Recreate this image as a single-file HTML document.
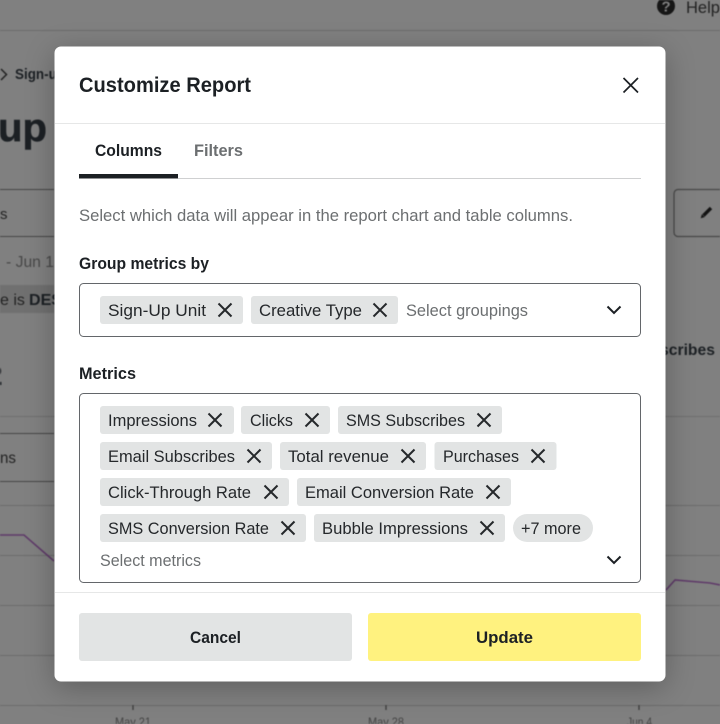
<!DOCTYPE html>
<html lang="en">
<head>
<meta charset="utf-8">
<title>Customize Report</title>
<style>
html,body{margin:0;padding:0;width:720px;height:724px;overflow:hidden;background:#808080}
svg{position:absolute;left:0;top:0;display:block}
.shadow{position:absolute;left:55px;top:47px;width:610px;height:634px;border-radius:6px;box-shadow:0 6px 30px rgba(0,0,0,.28)}
text{font-family:"Liberation Sans",sans-serif;font-size:16.5px;fill:#25282b}
.b{font-weight:700;fill:#1c2024}
.g{fill:#6c6f71}
.bg{fill:#222}
</style>
</head>
<body>
<svg width="720" height="724" viewBox="0 0 720 724" style="z-index:0;filter:blur(.6px)">
  <g fill="none">
    <path d="M0 30.500H720M0 505.500H720M0 555.500H720M0 605.500H720M0 655.500H720M0 705.500H720" stroke="#6c6c6c"/>
    <path d="M0 416.500H720" stroke="#6f6f6f"/>
    <path d="M0 189.500H54M0 236.500H54M0 433.500H54M0 481.500H54" stroke="#474747"/>
    <path d="M133 705V710M386 705V710M639 705V710" stroke="#3c3c3c" stroke-width="1.300"/>
    <path d="M0 535H24L54 561M666 590L675 580L710 583L720 585" stroke="#5f3a69" stroke-width="1.600"/>
    <path d="M1 69L6.500 74.500L1 80" stroke="#222" stroke-width="1.500"/>
    <rect x="674" y="189.500" width="60" height="47" rx="4" stroke="#474747" stroke-width="1.200"/>
    <path d="M703.500 215.500L711 208" stroke="#141414" stroke-width="3.400"/>
  </g>
  <path d="M700.700 218.200L701.800 214.200L704.700 217.100Z" fill="#141414"/>
  <rect x="0" y="285" width="54" height="28" fill="#707070"/>
  <circle cx="666" cy="6" r="9" fill="#161616"/>
  <text x="661.500" y="11.500" style="font-size:15px;font-weight:700;fill:#808080">?</text>
  <text x="686" y="13" class="bg" style="font-size:17px" textLength="34" lengthAdjust="spacingAndGlyphs">Help</text>
  <text x="15" y="79" class="b" style="font-size:15px" textLength="50" lengthAdjust="spacingAndGlyphs">Sign-up</text>
  <text x="-2" y="141" class="b" style="font-size:40px;stroke:#1c2024;stroke-width:.5px" textLength="49" lengthAdjust="spacingAndGlyphs">up</text>
  <text x="0" y="219" class="bg" style="font-size:15px">s</text>
  <text x="6" y="267" style="fill:#484848;font-size:16px" textLength="48" lengthAdjust="spacingAndGlyphs">- Jun 1</text>
  <text x="0" y="305" style="fill:#222;font-size:16px">e is</text>
  <text x="29" y="305" class="b" style="font-size:16px" textLength="33" lengthAdjust="spacingAndGlyphs">DES</text>
  <text x="-13" y="385" class="b" style="font-size:28px">2</text>
  <text x="0" y="463" class="bg" style="font-size:16px" textLength="16" lengthAdjust="spacingAndGlyphs">ns</text>
  <text x="660" y="355" class="b" style="font-size:15.500px" textLength="55" lengthAdjust="spacingAndGlyphs">scribes</text>
  <text x="115" y="726" style="fill:#444;font-size:12px" textLength="36" lengthAdjust="spacingAndGlyphs">May 21</text>
  <text x="368" y="726" style="fill:#444;font-size:12px" textLength="36" lengthAdjust="spacingAndGlyphs">May 28</text>
  <text x="627" y="726" style="fill:#444;font-size:12px" textLength="25" lengthAdjust="spacingAndGlyphs">Jun 4</text>
</svg>
<div class="shadow"></div>
<svg width="720" height="724" viewBox="0 0 720 724" style="z-index:2">
  <defs>
    <g id="x"><path d="M-6.500-6.500L6.500 6.500M6.500-6.500L-6.500 6.500" fill="none" stroke="#25282b" stroke-width="2"/></g>
    <g id="c"><path d="M-6.500-3.500L0 3L6.500-3.500" fill="none" stroke="#1c2024" stroke-width="2"/></g>
  </defs>
  <rect x="54.500" y="46.500" width="611" height="635" rx="6.500" fill="#fff"/>
  <path d="M55 123.500H665M55 592.500H665" stroke="#e6e7e7"/>
  <path d="M623.500 78L638 92.500M638 78L623.500 92.500" stroke="#1c2024" stroke-width="1.700" fill="none"/>
  <text x="79" y="92" class="b" style="font-size:21px" textLength="172" lengthAdjust="spacingAndGlyphs">Customize Report</text>

  <text x="95" y="156" class="b" textLength="67" lengthAdjust="spacingAndGlyphs">Columns</text>
  <text x="194" y="156" class="g" style="font-weight:700" textLength="49" lengthAdjust="spacingAndGlyphs">Filters</text>
  <path d="M178 178.500H641" stroke="#cfd0d1"/>
  <rect x="79" y="174" width="99" height="4.500" fill="#1c2024"/>

  <text x="79" y="221" class="g" textLength="494" lengthAdjust="spacingAndGlyphs">Select which data will appear in the report chart and table columns.</text>

  <text x="79" y="269" class="b" textLength="130" lengthAdjust="spacingAndGlyphs">Group metrics by</text>
  <rect x="79.500" y="283.500" width="561" height="53" rx="4" fill="#fff" stroke="#63666a"/>
  <rect x="100" y="296" width="143" height="28" rx="3" fill="#e2e4e4"/>
  <text x="108" y="316" textLength="98" lengthAdjust="spacingAndGlyphs">Sign-Up Unit</text>
  <use href="#x" x="225" y="310"/>
  <rect x="251" y="296" width="147" height="28" rx="3" fill="#e2e4e4"/>
  <text x="259" y="316" textLength="103" lengthAdjust="spacingAndGlyphs">Creative Type</text>
  <use href="#x" x="380" y="310"/>
  <text x="406" y="316" class="g" textLength="122" lengthAdjust="spacingAndGlyphs">Select groupings</text>
  <use href="#c" x="614" y="310"/>

  <text x="79" y="379" class="b" textLength="57" lengthAdjust="spacingAndGlyphs">Metrics</text>
  <rect x="79.500" y="393.500" width="561" height="189" rx="4" fill="#fff" stroke="#63666a"/>

  <rect x="100" y="406" width="134" height="28" rx="3" fill="#e2e4e4"/>
  <text x="108" y="426" textLength="89" lengthAdjust="spacingAndGlyphs">Impressions</text>
  <use href="#x" x="215" y="420"/>
  <rect x="241" y="406" width="89" height="28" rx="3" fill="#e2e4e4"/>
  <text x="250" y="426" textLength="43" lengthAdjust="spacingAndGlyphs">Clicks</text>
  <use href="#x" x="312" y="420"/>
  <rect x="338" y="406" width="164" height="28" rx="3" fill="#e2e4e4"/>
  <text x="346" y="426" textLength="119" lengthAdjust="spacingAndGlyphs">SMS Subscribes</text>
  <use href="#x" x="484" y="420"/>

  <rect x="100" y="442" width="172" height="28" rx="3" fill="#e2e4e4"/>
  <text x="108" y="462" textLength="127" lengthAdjust="spacingAndGlyphs">Email Subscribes</text>
  <use href="#x" x="254" y="456"/>
  <rect x="280" y="442" width="146" height="28" rx="3" fill="#e2e4e4"/>
  <text x="288" y="462" textLength="101" lengthAdjust="spacingAndGlyphs">Total revenue</text>
  <use href="#x" x="408" y="456"/>
  <rect x="434.500" y="442" width="122" height="28" rx="3" fill="#e2e4e4"/>
  <text x="443" y="462" textLength="76" lengthAdjust="spacingAndGlyphs">Purchases</text>
  <use href="#x" x="538" y="456"/>

  <rect x="100" y="478" width="189" height="28" rx="3" fill="#e2e4e4"/>
  <text x="108" y="498" textLength="143" lengthAdjust="spacingAndGlyphs">Click-Through Rate</text>
  <use href="#x" x="271" y="492"/>
  <rect x="297" y="478" width="214" height="28" rx="3" fill="#e2e4e4"/>
  <text x="305" y="498" textLength="169" lengthAdjust="spacingAndGlyphs">Email Conversion Rate</text>
  <use href="#x" x="493" y="492"/>

  <rect x="100" y="514" width="206" height="28" rx="3" fill="#e2e4e4"/>
  <text x="108" y="534" textLength="161" lengthAdjust="spacingAndGlyphs">SMS Conversion Rate</text>
  <use href="#x" x="288" y="528"/>
  <rect x="314" y="514" width="191" height="28" rx="3" fill="#e2e4e4"/>
  <text x="322" y="534" textLength="146" lengthAdjust="spacingAndGlyphs">Bubble Impressions</text>
  <use href="#x" x="487" y="528"/>
  <rect x="513" y="514" width="80" height="28" rx="14" fill="#e2e4e4"/>
  <text x="521" y="534" textLength="60" lengthAdjust="spacingAndGlyphs">+7 more</text>

  <text x="100" y="566" class="g" textLength="101" lengthAdjust="spacingAndGlyphs">Select metrics</text>
  <use href="#c" x="614" y="560"/>

  <rect x="79" y="613" width="273" height="48" rx="3" fill="#e2e4e4"/>
  <text x="190" y="643" class="b" textLength="51" lengthAdjust="spacingAndGlyphs">Cancel</text>
  <rect x="368" y="613" width="273" height="48" rx="3" fill="#fff27f"/>
  <text x="476" y="643" class="b" textLength="57" lengthAdjust="spacingAndGlyphs">Update</text>
</svg>
</body>
</html>
